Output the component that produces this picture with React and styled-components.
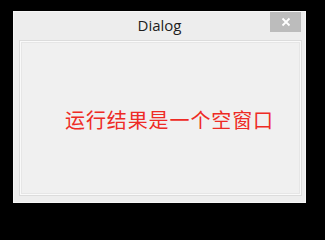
import React from 'react'
import styled, { createGlobalStyle } from 'styled-components'

const Global = createGlobalStyle`
	html, body {
		margin: 0;
		padding: 0;
		background: #000;
	}
`;

const Window = styled.div`
	margin: 11px 0 0 13px;
	width: 293px;
	height: 192px;
	background: #ededed;
	box-shadow: inset 0 0 0 1px #f6f6f6;
	display: flex;
	flex-direction: column;
	box-sizing: border-box;
	font-family: "Open Sans", "Noto Sans", sans-serif;
`;

const TitleBar = styled.div`
	height: 29px;
	display: grid;
	grid-template-columns: 1fr auto 1fr;
	align-items: start;
	padding: 1px 5px 0 0;
	box-sizing: border-box;
`;

const Title = styled.div`
	grid-column: 2;
	font-size: 15px;
	line-height: 26px;
	color: #1e1e1e;
	padding-left: 5px;
`;

const Close = styled.div`
	grid-column: 3;
	justify-self: end;
	width: 31px;
	height: 20px;
	background: #bcbcbc;
	display: flex;
	align-items: center;
	justify-content: center;
`;

const Body = styled.div`
	flex: 1;
	padding: 0 4px 7px 6px;
	display: flex;
`;

const Panel = styled.div`
	flex: 1;
	background: #f0f0f0;
	border: 1px solid #dcdcdc;
	box-shadow: inset 0 0 0 1px #fafafa, inset 0 0 0 2px #e6e6e6;
	padding: 64px 0 0 45px;
`;

const Message = styled.div`
	font-family: "Noto Sans CJK SC", sans-serif;
	font-size: 20px;
	line-height: 29px;
	color: #ee2b25;
	letter-spacing: 0.9px;
`;

export default function App() {
	return (
		<>
			<Global />
			<Window>
				<TitleBar>
					<Title>Dialog</Title>
					<Close>
						<svg width="10" height="10" viewBox="0 0 10 10">
							<path d="M1.5 1.5 L8.5 8.5 M8.5 1.5 L1.5 8.5" stroke="#fff" strokeWidth="1.8" />
						</svg>
					</Close>
				</TitleBar>
				<Body>
					<Panel>
						<Message>运行结果是一个空窗口</Message>
					</Panel>
				</Body>
			</Window>
		</>
	)
}
